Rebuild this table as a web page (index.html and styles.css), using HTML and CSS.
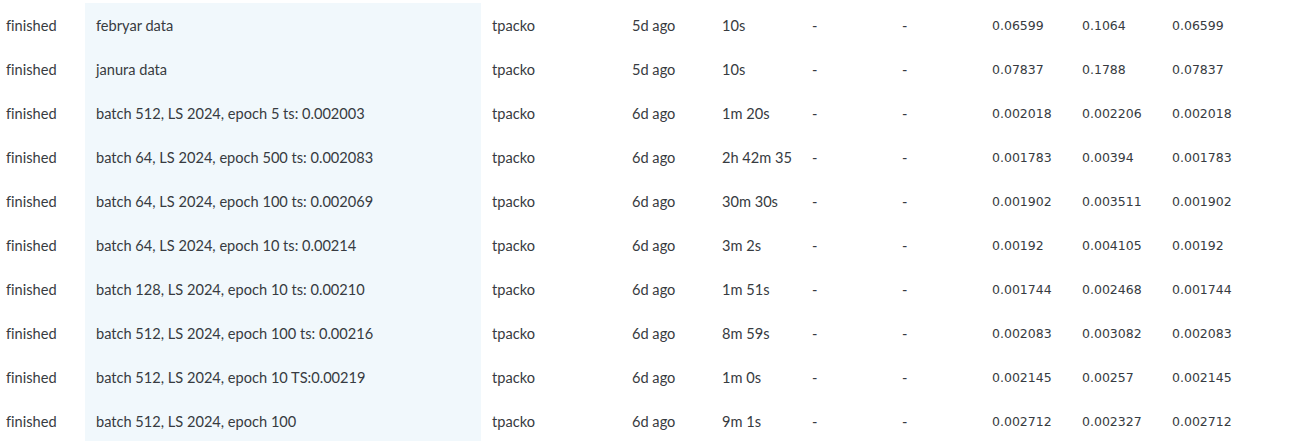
FILE: index.html
```html
<!DOCTYPE html>
<html>
<head>
<meta charset="utf-8">
<link rel="stylesheet" href="styles.css">
</head>
<body>
<div class="runs">
<table class="runs-table">
<colgroup>
<col class="c-state"><col class="c-name"><col class="c-user"><col class="c-std"><col class="c-std"><col class="c-std"><col class="c-std"><col class="c-std"><col class="c-std"><col class="c-std"><col>
</colgroup>
<tbody>
<tr><td>finished</td><td class="name">febryar data</td><td>tpacko</td><td>5d ago</td><td>10s</td><td>-</td><td>-</td><td class="num">0.06599</td><td class="num">0.1064</td><td class="num">0.06599</td><td></td></tr>
<tr><td>finished</td><td class="name">janura data</td><td>tpacko</td><td>5d ago</td><td>10s</td><td>-</td><td>-</td><td class="num">0.07837</td><td class="num">0.1788</td><td class="num">0.07837</td><td></td></tr>
<tr><td>finished</td><td class="name">batch 512, LS 2024, epoch 5 ts: 0.002003</td><td>tpacko</td><td>6d ago</td><td>1m 20s</td><td>-</td><td>-</td><td class="num">0.002018</td><td class="num">0.002206</td><td class="num">0.002018</td><td></td></tr>
<tr><td>finished</td><td class="name">batch 64, LS 2024, epoch 500 ts: 0.002083</td><td>tpacko</td><td>6d ago</td><td>2h 42m 35</td><td>-</td><td>-</td><td class="num">0.001783</td><td class="num">0.00394</td><td class="num">0.001783</td><td></td></tr>
<tr><td>finished</td><td class="name">batch 64, LS 2024, epoch 100 ts: 0.002069</td><td>tpacko</td><td>6d ago</td><td>30m 30s</td><td>-</td><td>-</td><td class="num">0.001902</td><td class="num">0.003511</td><td class="num">0.001902</td><td></td></tr>
<tr><td>finished</td><td class="name">batch 64, LS 2024, epoch 10 ts: 0.00214</td><td>tpacko</td><td>6d ago</td><td>3m 2s</td><td>-</td><td>-</td><td class="num">0.00192</td><td class="num">0.004105</td><td class="num">0.00192</td><td></td></tr>
<tr><td>finished</td><td class="name">batch 128, LS 2024, epoch 10 ts: 0.00210</td><td>tpacko</td><td>6d ago</td><td>1m 51s</td><td>-</td><td>-</td><td class="num">0.001744</td><td class="num">0.002468</td><td class="num">0.001744</td><td></td></tr>
<tr><td>finished</td><td class="name">batch 512, LS 2024, epoch 100 ts: 0.00216</td><td>tpacko</td><td>6d ago</td><td>8m 59s</td><td>-</td><td>-</td><td class="num">0.002083</td><td class="num">0.003082</td><td class="num">0.002083</td><td></td></tr>
<tr><td>finished</td><td class="name">batch 512, LS 2024, epoch 10 TS:0.00219</td><td>tpacko</td><td>6d ago</td><td>1m 0s</td><td>-</td><td>-</td><td class="num">0.002145</td><td class="num">0.00257</td><td class="num">0.002145</td><td></td></tr>
<tr><td>finished</td><td class="name">batch 512, LS 2024, epoch 100</td><td>tpacko</td><td>6d ago</td><td>9m 1s</td><td>-</td><td>-</td><td class="num">0.002712</td><td class="num">0.002327</td><td class="num">0.002712</td><td></td></tr>
</tbody>
</table>
</div>
</body>
</html>
```
FILE: styles.css
```css
html, body {
  margin: 0;
  padding: 0;
  background: #ffffff;
}
.runs {
  padding-top: 3px;
  width: 1299px;
  overflow: hidden;
}
.runs-table {
  border-collapse: collapse;
  table-layout: fixed;
  width: 1299px;
  font-family: Lato, "Liberation Sans", sans-serif;
  font-size: 14.6px;
  font-variant-ligatures: none;
  color: #373b41;
}
.c-state { width: 85px; }
.c-name { width: 396px; }
.c-user { width: 140px; }
.c-std { width: 90px; }
.runs-table td {
  height: 44px;
  padding: 0 0 0 11px;
  white-space: nowrap;
  overflow: hidden;
  vertical-align: middle;
}
.runs-table td:first-child {
  padding-left: 6px;
}
.runs-table td.name {
  background: #f1f8fc;
}
.runs-table td.num {
  font-family: "DejaVu Sans", Verdana, sans-serif;
  font-size: 12.5px;
}
```
